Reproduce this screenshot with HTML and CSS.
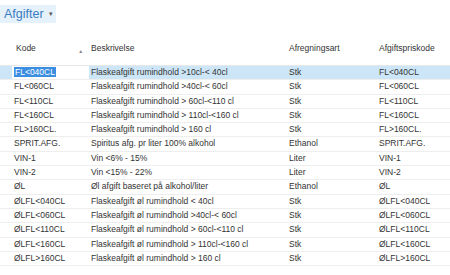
FILE: index.html
```html
<!DOCTYPE html>
<html lang="da">
<head>
  <meta charset="UTF-8">
  <title>Afgifter</title>
  <link rel="stylesheet" href="styles.css">
</head>
<body>
  <div class="page">
    <div class="title">Afgifter <span class="caret">&#9662;</span></div>

    <table class="grid">
      <colgroup>
        <col class="c-sel">
        <col class="c-kode">
        <col class="c-besk">
        <col class="c-art">
        <col class="c-pris">
      </colgroup>
      <thead>
        <tr>
          <th></th>
          <th>Kode <span class="sort">&#9650;</span></th>
          <th>Beskrivelse</th>
          <th>Afregningsart</th>
          <th>Afgiftspriskode</th>
        </tr>
      </thead>
      <tbody>
        <tr class="current">
          <td></td>
          <td class="edit"><span class="sel">FL&lt;040CL</span></td>
          <td>Flaskeafgift rumindhold &gt;10cl-&lt; 40cl</td>
          <td>Stk</td>
          <td>FL&lt;040CL</td>
        </tr>
        <tr><td></td><td>FL&lt;060CL</td><td>Flaskeafgift rumindhold &gt;40cl-&lt; 60cl</td><td>Stk</td><td>FL&lt;060CL</td></tr>
        <tr><td></td><td>FL&lt;110CL</td><td>Flaskeafgift rumindhold &gt; 60cl-&lt;110 cl</td><td>Stk</td><td>FL&lt;110CL</td></tr>
        <tr><td></td><td>FL&lt;160CL</td><td>Flaskeafgift rumindhold &gt; 110cl-&lt;160 cl</td><td>Stk</td><td>FL&lt;160CL</td></tr>
        <tr><td></td><td>FL&gt;160CL.</td><td>Flaskeafgift rumindhold &gt; 160 cl</td><td>Stk</td><td>FL&gt;160CL.</td></tr>
        <tr><td></td><td>SPRIT.AFG.</td><td>Spiritus afg. pr liter 100% alkohol</td><td>Ethanol</td><td>SPRIT.AFG.</td></tr>
        <tr><td></td><td>VIN-1</td><td>Vin &lt;6% - 15%</td><td>Liter</td><td>VIN-1</td></tr>
        <tr><td></td><td>VIN-2</td><td>Vin &lt;15% - 22%</td><td>Liter</td><td>VIN-2</td></tr>
        <tr><td></td><td>ØL</td><td>Øl afgift baseret på alkohol/liter</td><td>Ethanol</td><td>ØL</td></tr>
        <tr><td></td><td>ØLFL&lt;040CL</td><td>Flaskeafgift øl rumindhold &lt; 40cl</td><td>Stk</td><td>ØLFL&lt;040CL</td></tr>
        <tr><td></td><td>ØLFL&lt;060CL</td><td>Flaskeafgift øl rumindhold &gt;40cl-&lt; 60cl</td><td>Stk</td><td>ØLFL&lt;060CL</td></tr>
        <tr><td></td><td>ØLFL&lt;110CL</td><td>Flaskeafgift øl rumindhold &gt; 60cl-&lt;110 cl</td><td>Stk</td><td>ØLFL&lt;110CL</td></tr>
        <tr><td></td><td>ØLFL&lt;160CL</td><td>Flaskeafgift øl rumindhold &gt; 110cl-&lt;160 cl</td><td>Stk</td><td>ØLFL&lt;160CL</td></tr>
        <tr><td></td><td>ØLFL&gt;160CL</td><td>Flaskeafgift øl rumindhold &gt; 160 cl</td><td>Stk</td><td>ØLFL&gt;160CL</td></tr>
      </tbody>
    </table>
  </div>
</body>
</html>
```

FILE: styles.css
```css
body {
  margin: 0;
  background: #fff;
  font-family: "Liberation Sans", Arial, sans-serif;
  color: #333;
  overflow: hidden;
}
.page {
  width: 450px;
  padding-top: 4px;
}
.title {
  display: inline-block;
  background: #e5f1fb;
  color: #3a7cc0;
  font-size: 12.5px;
  line-height: 18px;
  height: 18px;
  padding: 0 3px 0 4px;
}
.caret {
  font-size: 7px;
  color: #555;
  vertical-align: 2px;
  margin-left: 2px;
}
.grid {
  border-collapse: collapse;
  table-layout: fixed;
  width: 450px;
  margin-top: 11px;
  font-size: 8.5px;
}
.c-sel { width: 12px; }
.c-kode { width: 77px; }
.c-besk { width: 198px; }
.c-art { width: 90px; }
.c-pris { width: 73px; }
.grid th {
  text-align: left;
  font-weight: normal;
  height: 28px;
  padding: 0 0 3px 2px;
  vertical-align: middle;
  white-space: nowrap;
  border-bottom: 1px solid #e8e8e8;
}
.grid th:nth-child(2) {
  padding-left: 4px;
}
.sort {
  font-size: 5px;
  color: #888;
  margin-left: 40px;
  vertical-align: -2px;
}
.grid td {
  height: 13.3px;
  line-height: 13.3px;
  padding: 0 0 0 2px;
  white-space: nowrap;
  overflow: hidden;
  border-bottom: 1px solid #eeeeee;
}
.grid tr.current td {
  background: #cde6f7;
}
.grid tr.current td.edit {
  background: #fff;
}
.sel {
  background: #3b8ee0;
  color: #fff;
  padding: 0 1px;
}
```
